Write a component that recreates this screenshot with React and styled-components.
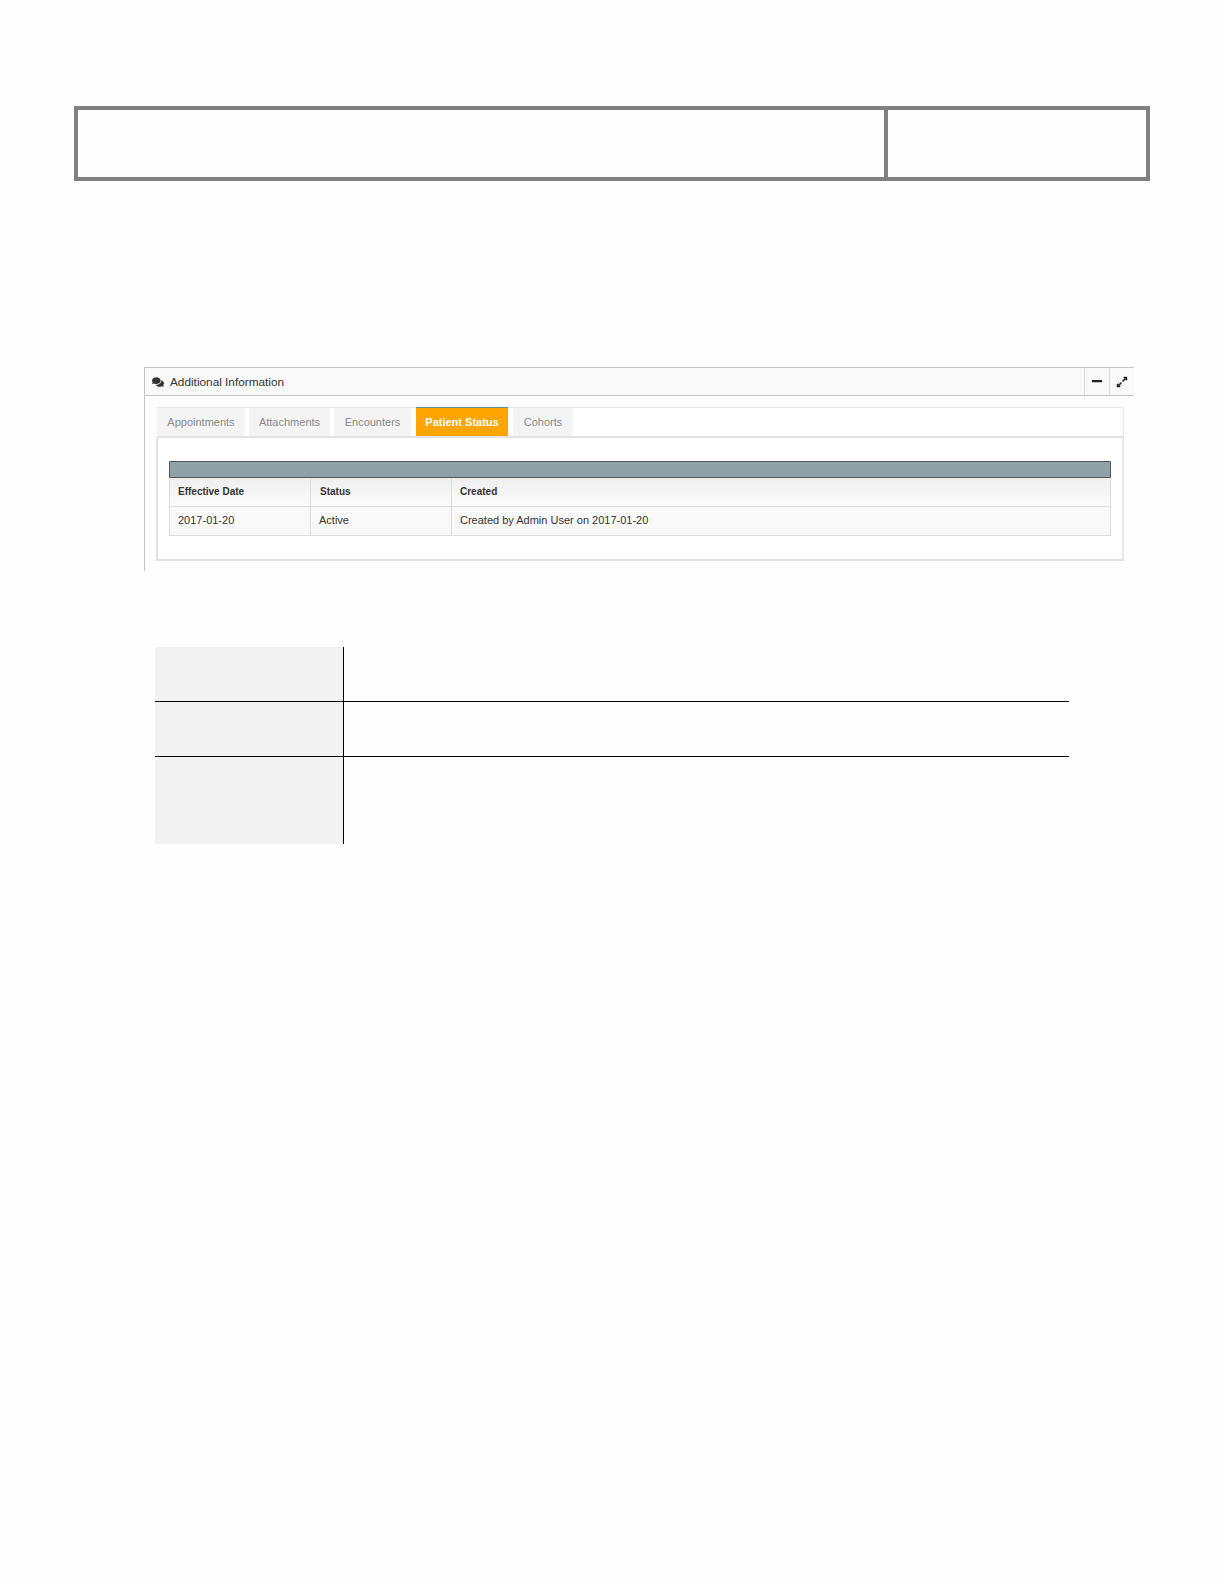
import React from "react";
import styled, { createGlobalStyle } from "styled-components";
import { FaComments, FaMinus, FaExpandAlt } from "react-icons/fa";

const GlobalStyle = createGlobalStyle`
  html, body {
    margin: 0;
    padding: 0;
    background: #fefefe;
    font-family: "Liberation Sans", Arial, sans-serif;
  }
`;

const Page = styled.div`
  width: 1224px;
  height: 1584px;
  box-sizing: border-box;
  padding: 106px 0 0 74px;
`;

const HeaderBox = styled.div`
  width: 1076px;
  height: 75px;
  box-sizing: border-box;
  border: 4px solid #808080;
  display: grid;
  grid-template-columns: 806px 1fr;
`;

const HeaderCell = styled.div`
  & + & {
    border-left: 4px solid #808080;
  }
`;

const Panel = styled.section`
  width: 990px;
  height: 204px;
  box-sizing: border-box;
  margin: 186px 0 0 70px;
  border-left: 1px solid #c4c4c4;
`;

const PanelHeader = styled.div`
  height: 29px;
  box-sizing: border-box;
  display: flex;
  align-items: stretch;
  background: #f9f9f9;
  border-top: 1px solid #c4c4c4;
  border-bottom: 1px solid #c4c4c4;
`;

const PanelTitle = styled.div`
  flex: 1;
  display: flex;
  align-items: center;
  gap: 6px;
  padding: 1px 0 0 7px;
  font-size: 11.8px;
  color: #333;
`;

const PanelAction = styled.div`
  width: 25px;
  box-sizing: border-box;
  padding-bottom: ${(p) => (p.$raised ? "2px" : "0")};
  display: flex;
  align-items: center;
  justify-content: center;
  border-left: 1px solid #ddd;
  color: #222;
`;

const PanelBody = styled.div`
  padding: 11px 10px 0 11px;
`;

const TabBar = styled.div`
  height: 31px;
  box-sizing: border-box;
  margin-left: 1px;
  display: flex;
  gap: 4px;
  background: #fff;
  border-top: 1px solid #e8e8e8;
  border-right: 1px solid #e8e8e8;
  border-bottom: 2px solid #e2e2e2;
`;

const Tab = styled.div`
  width: ${(p) => p.$width}px;
  box-sizing: border-box;
  display: flex;
  align-items: center;
  justify-content: center;
  font-size: 11px;
  font-weight: ${(p) => (p.$active ? 700 : 400)};
  color: ${(p) => (p.$active ? "#fff" : "#8a8a8a")};
  background: ${(p) => (p.$active ? "#ffa500" : "#f4f4f4")};
  border-top: ${(p) => (p.$active ? "1px solid #5b8fa8" : "none")};
  margin: ${(p) => (p.$active ? "-1px 1px 0" : "0")};
`;

const TabContent = styled.div`
  height: 123px;
  box-sizing: border-box;
  padding: 23px 11px 0 11px;
  background: #fff;
  border-left: 2px solid #e0e0e0;
  border-right: 2px solid #e8e8e8;
  border-bottom: 2px solid #e2e2e2;
`;

const DataTable = styled.div`
  display: grid;
  grid-template-columns: 141px 141px 1fr;
`;

const TableTitle = styled.div`
  grid-column: 1 / -1;
  height: 17px;
  box-sizing: border-box;
  background: #90a1a8;
  border: 1px solid #555;
  border-radius: 1px;
`;

const HeadCell = styled.div`
  height: 29px;
  box-sizing: border-box;
  display: flex;
  align-items: center;
  padding: 0 0 2px ${(p) => p.$pad || 8}px;
  font-size: 10px;
  font-weight: 700;
  color: #333;
  background: linear-gradient(#efefef, #fbfbfb);
  border-left: 1px solid #ddd;
  border-bottom: 1px solid #ddd;
  &:nth-child(4) {
    border-right: 1px solid #ddd;
  }
`;

const BodyCell = styled.div`
  height: 29px;
  box-sizing: border-box;
  display: flex;
  align-items: center;
  padding: 0 0 2px ${(p) => p.$pad || 8}px;
  font-size: 11px;
  color: #333;
  background: #f9f9f9;
  border-left: 1px solid #ddd;
  border-bottom: 1px solid #ddd;
  &:last-child {
    border-right: 1px solid #ddd;
  }
`;

const InfoTable = styled.div`
  width: 914px;
  margin: 76px 0 0 81px;
`;

const InfoRow = styled.div`
  height: ${(p) => p.$height}px;
  box-sizing: border-box;
  display: grid;
  grid-template-columns: 189px 1fr;
  & + & {
    border-top: 1px solid #000;
  }
`;

const InfoLabel = styled.div`
  background: #f2f2f2;
  border-right: 1px solid #000;
`;

const InfoValue = styled.div``;

const tabs = [
  { label: "Appointments", width: 88 },
  { label: "Attachments", width: 81 },
  { label: "Encounters", width: 77 },
  { label: "Patient Status", width: 92, active: true },
  { label: "Cohorts", width: 60 },
];

export default function App() {
  return (
    <Page>
      <GlobalStyle />
      <HeaderBox>
        <HeaderCell />
        <HeaderCell />
      </HeaderBox>

      <Panel>
        <PanelHeader>
          <PanelTitle>
            <FaComments size={12} color="#333" />
            Additional Information
          </PanelTitle>
          <PanelAction $raised>
            <FaMinus size={12} />
          </PanelAction>
          <PanelAction>
            <FaExpandAlt size={12} />
          </PanelAction>
        </PanelHeader>
        <PanelBody>
          <TabBar>
            {tabs.map((tab) => (
              <Tab key={tab.label} $width={tab.width} $active={tab.active}>
                {tab.label}
              </Tab>
            ))}
          </TabBar>
          <TabContent>
            <DataTable>
              <TableTitle />
              <HeadCell>Effective Date</HeadCell>
              <HeadCell $pad={9}>Status</HeadCell>
              <HeadCell>Created</HeadCell>
              <BodyCell>2017-01-20</BodyCell>
              <BodyCell>Active</BodyCell>
              <BodyCell>Created by Admin User on 2017-01-20</BodyCell>
            </DataTable>
          </TabContent>
        </PanelBody>
      </Panel>

      <InfoTable>
        <InfoRow $height={54}>
          <InfoLabel />
          <InfoValue />
        </InfoRow>
        <InfoRow $height={55}>
          <InfoLabel />
          <InfoValue />
        </InfoRow>
        <InfoRow $height={88}>
          <InfoLabel />
          <InfoValue />
        </InfoRow>
      </InfoTable>
    </Page>
  );
}
